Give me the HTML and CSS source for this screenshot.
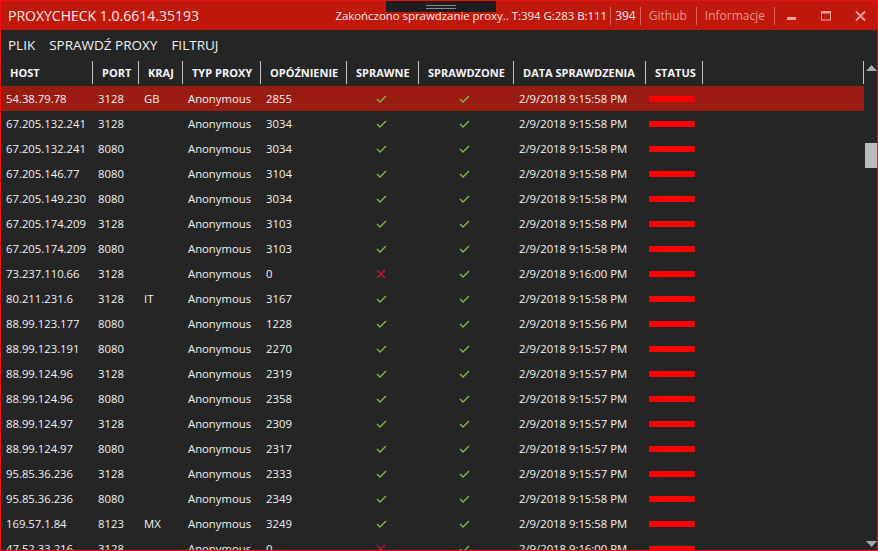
FILE: index.html
```html
<!DOCTYPE html>
<html lang="pl">
<head>
<meta charset="utf-8">
<title>PROXYCHECK</title>
<link rel="stylesheet" href="styles.css">
</head>
<body>
<div class="window">
  <div class="grip"><span></span><span></span></div>
  <header class="titlebar">
    <span class="title">PROXYCHECK 1.0.6614.35193</span>
    <div class="title-right">
      <span class="status-text">Zakończono sprawdzanie proxy.. T:394 G:283 B:111</span>
      <span class="tsep"></span>
      <span class="count">394</span>
      <span class="tsep"></span>
      <span class="tlink">Github</span>
      <span class="tsep"></span>
      <span class="tlink">Informacje</span>
      <span class="tsep"></span>
      <span class="ctrl"><svg width="10" height="10" viewBox="0 0 10 10"><rect x="0" y="6" width="9" height="3" fill="#f0a49c"/></svg></span>
      <span class="ctrl"><svg width="10" height="10" viewBox="0 0 10 10"><rect x="0.5" y="0.5" width="9" height="8.5" fill="none" stroke="#f0a49c"/><rect x="0" y="0" width="10" height="2.5" fill="#f0a49c"/></svg></span>
      <span class="ctrl"><svg width="11" height="10" viewBox="0 0 11 10"><path d="M1 0.5 L10 9.5 M10 0.5 L1 9.5" stroke="#f0a49c" stroke-width="1.8"/></svg></span>
    </div>
  </header>
  <nav class="menubar">
    <span>PLIK</span>
    <span>SPRAWDŹ PROXY</span>
    <span>FILTRUJ</span>
  </nav>
  <div class="grid-area">
    <div class="table">
      <div class="thead cols">
        <div class="th">HOST</div>
        <div class="th">PORT</div>
        <div class="th">KRAJ</div>
        <div class="th">TYP PROXY</div>
        <div class="th">OPÓŹNIENIE</div>
        <div class="th">SPRAWNE</div>
        <div class="th">SPRAWDZONE</div>
        <div class="th">DATA SPRAWDZENIA</div>
        <div class="th">STATUS</div>
        <div class="th"></div>
      </div>
      <div class="tbody" id="tbody"></div>
    </div>
    <div class="scrollbar">
      <svg class="arrow" width="11" height="6" viewBox="0 0 11 6"><polygon points="0,6 11,6 5.5,0" fill="#a8a8a8"/></svg>
      <div class="track"><div class="thumb"></div></div>
      <svg class="arrow" width="11" height="6" viewBox="0 0 11 6"><polygon points="0,0 11,0 5.5,6" fill="#a8a8a8"/></svg>
    </div>
  </div>
</div>
<script src="app.js"></script>
</body>
</html>
```

FILE: app.js
```js
var data = [
  ["54.38.79.78","3128","GB","Anonymous","2855",1,"2/9/2018 9:15:58 PM"],
  ["67.205.132.241","3128","","Anonymous","3034",1,"2/9/2018 9:15:58 PM"],
  ["67.205.132.241","8080","","Anonymous","3034",1,"2/9/2018 9:15:58 PM"],
  ["67.205.146.77","8080","","Anonymous","3104",1,"2/9/2018 9:15:58 PM"],
  ["67.205.149.230","8080","","Anonymous","3034",1,"2/9/2018 9:15:58 PM"],
  ["67.205.174.209","3128","","Anonymous","3103",1,"2/9/2018 9:15:58 PM"],
  ["67.205.174.209","8080","","Anonymous","3103",1,"2/9/2018 9:15:58 PM"],
  ["73.237.110.66","3128","","Anonymous","0",0,"2/9/2018 9:16:00 PM"],
  ["80.211.231.6","3128","IT","Anonymous","3167",1,"2/9/2018 9:15:58 PM"],
  ["88.99.123.177","8080","","Anonymous","1228",1,"2/9/2018 9:15:56 PM"],
  ["88.99.123.191","8080","","Anonymous","2270",1,"2/9/2018 9:15:57 PM"],
  ["88.99.124.96","3128","","Anonymous","2319",1,"2/9/2018 9:15:57 PM"],
  ["88.99.124.96","8080","","Anonymous","2358",1,"2/9/2018 9:15:57 PM"],
  ["88.99.124.97","3128","","Anonymous","2309",1,"2/9/2018 9:15:57 PM"],
  ["88.99.124.97","8080","","Anonymous","2317",1,"2/9/2018 9:15:57 PM"],
  ["95.85.36.236","3128","","Anonymous","2333",1,"2/9/2018 9:15:57 PM"],
  ["95.85.36.236","8080","","Anonymous","2349",1,"2/9/2018 9:15:58 PM"],
  ["169.57.1.84","8123","MX","Anonymous","3249",1,"2/9/2018 9:15:58 PM"],
  ["47.52.33.216","3128","","Anonymous","0",0,"2/9/2018 9:16:00 PM"]
];
var check = '<svg width="11" height="8" viewBox="0 0 11 8"><polyline points="1,4 4,7 10,1" fill="none" stroke="#7cc043" stroke-width="1.3"/></svg>';
var cross = '<svg width="10" height="10" viewBox="0 0 10 10"><path d="M1 1 L9 9 M9 1 L1 9" stroke="#d3123a" stroke-width="1.2"/></svg>';
var html = "";
data.forEach(function (r, i) {
  html += '<div class="tr cols' + (i === 0 ? ' selected' : '') + '">' +
    '<div class="td">' + r[0] + '</div>' +
    '<div class="td">' + r[1] + '</div>' +
    '<div class="td">' + r[2] + '</div>' +
    '<div class="td">' + r[3] + '</div>' +
    '<div class="td">' + r[4] + '</div>' +
    '<div class="td center">' + (r[5] ? check : cross) + '</div>' +
    '<div class="td center">' + check + '</div>' +
    '<div class="td">' + r[6] + '</div>' +
    '<div class="td"><span class="bar"></span></div>' +
    '<div class="td"></div>' +
    '</div>';
});
document.getElementById("tbody").innerHTML = html;
```

FILE: styles.css
```css
* { box-sizing: border-box; }
html, body { margin: 0; padding: 0; background: #252525; }
body { font-family: "Open Sans", "Noto Sans", sans-serif; color: #f2f2f2; }

.window {
  position: relative;
  width: 878px;
  height: 551px;
  border: 1px solid #f40f0f;
  display: flex;
  flex-direction: column;
  overflow: hidden;
  background: #252525;
}

.grip {
  position: absolute;
  left: 385px;
  top: 0;
  width: 110px;
  height: 11px;
  background: #1e1e1e;
  display: flex;
  flex-direction: column;
  align-items: center;
  padding-top: 4px;
  gap: 2px;
}
.grip span { display: block; width: 30px; height: 1px; background: #8a8a8a; }

.titlebar {
  height: 29px;
  flex: none;
  background: #c0180b;
  display: flex;
  align-items: center;
  justify-content: space-between;
  padding-left: 7px;
}
.title { font-size: 14px; color: #f7e8e6; }
.title-right { display: flex; align-items: center; height: 100%; font-size: 11.4px; }
.status-text { color: #fbeeee; }
.count { color: #fbeeee; margin: 0 4px; font-size: 12px; }
.tlink { color: #e9968e; margin: 0 9px; font-size: 12px; }
.tsep { width: 1px; height: 18px; background: #d9635a; }
.tsep + .tlink { margin-left: 8px; }
.status-text + .tsep { margin-left: 3px; }
.ctrl { width: 34px; display: flex; justify-content: center; align-items: center; }
.ctrl:first-of-type { margin-left: 4px; }

.menubar {
  height: 30px;
  flex: none;
  display: flex;
  align-items: center;
  gap: 14px;
  padding-left: 7px;
  font-size: 13.5px;
  color: #f2f2f2;
}

.grid-area { flex: 1; display: flex; min-height: 0; }
.table { flex: 1; min-width: 0; overflow: hidden; }

.cols {
  display: grid;
  grid-template-columns: 92px 46px 44px 78px 86px 72px 95px 132px 57px 1fr;
}

.thead { height: 26px; padding: 1px 0 2px; }
.th {
  border-right: 1px solid #c4c4c4;
  font-size: 11px;
  font-weight: 700;
  color: #f4f6fb;
  padding-left: 9px;
  line-height: 23px;
  white-space: nowrap;
  overflow: hidden;
}

.tr { height: 25px; }
.tr.selected { background: #9a1b11; }
.td {
  font-size: 11.3px;
  line-height: 25px;
  padding-left: 5px;
  white-space: nowrap;
  overflow: hidden;
  display: flex;
  align-items: center;
}
.td.center { justify-content: center; padding-left: 0; padding-right: 4px; }
.bar {
  display: block;
  width: 46px;
  height: 6px;
  background: #ff0000;
  border-right: 1px solid #c41010;
  margin-left: -2px;
}

.scrollbar {
  width: 13px;
  flex: none;
  display: flex;
  flex-direction: column;
  align-items: flex-end;
  padding: 5px 0 3px;
}
.scrollbar .arrow { flex: none; }
.track { flex: 1; width: 12px; padding-top: 72px; }
.thumb { width: 12px; height: 25px; background: #bcbcbc; }
```
